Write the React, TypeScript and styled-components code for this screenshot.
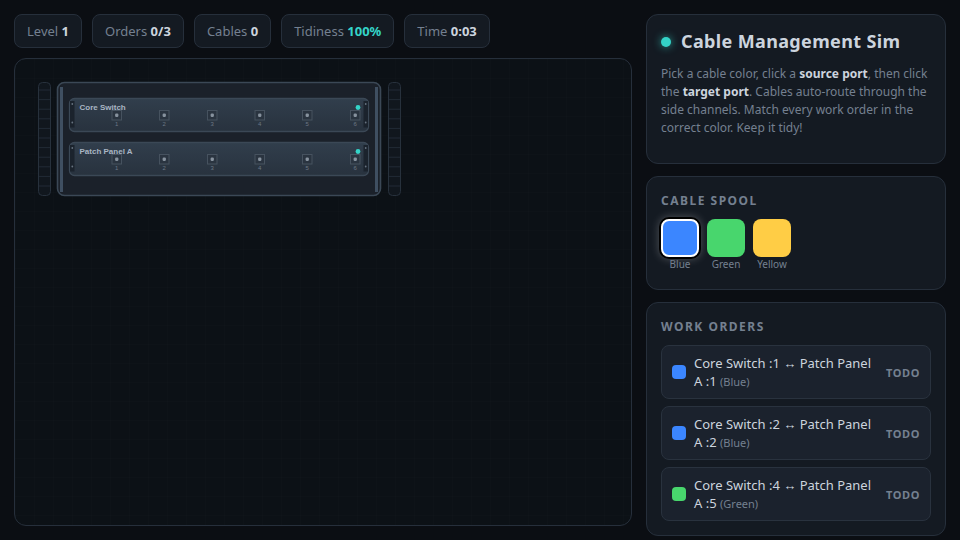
import styled, { createGlobalStyle } from 'styled-components';

const GlobalStyle = createGlobalStyle`
  * {
    box-sizing: border-box;
  }

  html,
  body {
    margin: 0;
    height: 100%;
    overflow: hidden;
    background: #0b0e13;
    font-family: 'Noto Sans', sans-serif;
  }
`;

const stats = [
  { label: 'Level', value: '1' },
  { label: 'Orders', value: '0/3' },
  { label: 'Cables', value: '0' },
  { label: 'Tidiness', value: '100%', good: true },
  { label: 'Time', value: '0:03' },
];

const spools = [
  { name: 'Blue', color: '#3b86ff', active: true },
  { name: 'Green', color: '#48d66d' },
  { name: 'Yellow', color: '#ffcd45' },
];

const orders = [
  { from: 1, to: 1, name: 'Blue', color: '#3b86ff' },
  { from: 2, to: 2, name: 'Blue', color: '#3b86ff' },
  { from: 4, to: 5, name: 'Green', color: '#48d66d' },
];

const portX = [116.5, 164, 212, 259.5, 307, 355];
const railSlots = Array.from({ length: 11 }, (_, i) => 90 + i * 9.6);

const RackUnit = ({ top, name }: { top: number; name: string }) => (
  <g>
    <rect x="69.5" y={top + 0.5} width="299" height="33" rx="5" fill="url(#unitFill)" stroke="#3b4856" strokeWidth="1.3" />
    <rect x="70" y={top + 3} width="4.5" height="26.5" fill="#1b232d" />
    <rect x="363.5" y={top + 3} width="4.5" height="26.5" fill="#1b232d" />
    <circle cx="72.3" cy={top + 6} r="0.9" fill="#66727f" />
    <circle cx="72.3" cy={top + 24.5} r="0.9" fill="#66727f" />
    <circle cx="365.7" cy={top + 6} r="0.9" fill="#66727f" />
    <circle cx="365.7" cy={top + 24.5} r="0.9" fill="#66727f" />
    <UnitLabel x="79.5" y={top + 12}>
      {name}
    </UnitLabel>
    {portX.map((x, i) => (
      <g key={x}>
        <rect x={x - 4.5} y={top + 12.5} width="9.5" height="9.5" fill="#2a3440" stroke="#46525f" />
        <rect x={x - 1.4} y={top + 15.6} width="3.3" height="3.3" rx="1.2" fill="#87929e" />
        <PortNumber x={x + 0.2} y={top + 27.5}>
          {i + 1}
        </PortNumber>
      </g>
    ))}
    <circle cx="358" cy={top + 9.5} r="2.4" fill="#34d4c8" />
  </g>
);

const Rail = ({ x }: { x: number }) => (
  <g>
    <rect x={x + 0.5} y="82.5" width="12" height="113" rx="4" fill="#11171e" stroke="#27313c" />
    {railSlots.map((y) => (
      <line key={y} x1={x + 1} x2={x + 12} y1={y} y2={y} stroke="#222b36" />
    ))}
  </g>
);

const App = () => {
  return (
    <Page>
      <GlobalStyle />
      <MainColumn>
        <StatsBar>
          {stats.map((stat) => (
            <StatPill key={stat.label}>
              {stat.label} <StatValue $good={stat.good}>{stat.value}</StatValue>
            </StatPill>
          ))}
        </StatsBar>
        <Canvas>
          <RackSvg viewBox="15 59 616 466" role="img" aria-label="Server rack">
            <defs>
              <linearGradient id="unitFill" x1="0" y1="0" x2="0" y2="1">
                <stop offset="0" stopColor="#313e4c" />
                <stop offset="1" stopColor="#28323e" />
              </linearGradient>
            </defs>
            <Rail x={38} />
            <Rail x={388} />
            <rect x="57.5" y="82.5" width="323" height="113" rx="7" fill="#1b212a" stroke="#3b4856" strokeWidth="1.6" />
            <rect x="60" y="87" width="3" height="105" fill="#3f4f61" />
            <rect x="375" y="87" width="3" height="105" fill="#3f4f61" />
            <RackUnit top={98} name="Core Switch" />
            <RackUnit top={142} name="Patch Panel A" />
          </RackSvg>
        </Canvas>
      </MainColumn>
      <SideColumn>
        <IntroPanel>
          <TitleRow>
            <TitleDot />
            <Title>Cable Management Sim</Title>
          </TitleRow>
          <Intro>
            Pick a cable color, click a <strong>source port</strong>, then click the <strong>target port</strong>. Cables
            auto-route through the side channels. Match every work order in the correct color. Keep it tidy!
          </Intro>
        </IntroPanel>
        <Panel>
          <SectionTitle>Cable Spool</SectionTitle>
          <SpoolRow>
            {spools.map((spool) => (
              <Spool key={spool.name}>
                <SpoolSwatch $color={spool.color} $active={spool.active} />
                <SpoolName>{spool.name}</SpoolName>
              </Spool>
            ))}
          </SpoolRow>
        </Panel>
        <Panel>
          <SectionTitle>Work Orders</SectionTitle>
          <OrderList>
            {orders.map((order) => (
              <OrderRow key={order.from}>
                <OrderSwatch $color={order.color} />
                <OrderText>
                  Core Switch :{order.from} ↔ Patch Panel A :{order.to} <OrderColor>({order.name})</OrderColor>
                </OrderText>
                <OrderStatus>Todo</OrderStatus>
              </OrderRow>
            ))}
          </OrderList>
        </Panel>
      </SideColumn>
    </Page>
  );
};

const Page = styled.div`
  display: flex;
  gap: 14px;
  width: 960px;
  height: 540px;
  padding: 14px;
  background: #0b0e13;
`;

const MainColumn = styled.main`
  display: flex;
  flex-direction: column;
  gap: 10px;
  width: 618px;
  height: 512px;
`;

const StatsBar = styled.div`
  display: flex;
  gap: 10px;
`;

const StatPill = styled.div`
  height: 34px;
  padding: 0 12px;
  font-size: 13px;
  line-height: 32px;
  color: #748090;
  background: #141a22;
  border: 1px solid #262f3b;
  border-radius: 8px;
`;

const StatValue = styled.b<{ $good?: boolean }>`
  font-weight: 700;
  color: ${(props) => (props.$good ? '#34d4c8' : '#ccd4de')};
`;

const Canvas = styled.section`
  flex: 1;
  overflow: hidden;
  background-color: #0c1116;
  background-image:
    linear-gradient(rgba(255, 255, 255, 0.008) 1px, transparent 1px),
    linear-gradient(90deg, rgba(255, 255, 255, 0.008) 1px, transparent 1px);
  background-size: 19px 19px;
  border: 1px solid #262f3b;
  border-radius: 12px;
`;

const RackSvg = styled.svg`
  display: block;
  width: 616px;
  height: 466px;
`;

const UnitLabel = styled.text`
  font-family: 'Liberation Sans', sans-serif;
  font-size: 8px;
  font-weight: 700;
  fill: #a9b6c4;
`;

const PortNumber = styled.text`
  font-family: 'Liberation Sans', sans-serif;
  font-size: 6px;
  text-anchor: middle;
  fill: #6b7785;
`;

const SideColumn = styled.aside`
  display: flex;
  flex-direction: column;
  gap: 12px;
  width: 300px;
`;

const Panel = styled.section`
  flex: none;
  padding: 14px;
  background: #141a22;
  border: 1px solid #262f3b;
  border-radius: 12px;
`;

const IntroPanel = styled(Panel)`
  height: 150px;
`;

const TitleRow = styled.div`
  display: flex;
  align-items: center;
  gap: 10px;
  margin-bottom: 11px;
`;

const TitleDot = styled.span`
  width: 10px;
  height: 10px;
  background: #34d4c8;
  border-radius: 50%;
  box-shadow: 0 0 8px rgba(52, 212, 200, 0.7);
`;

const Title = styled.h1`
  margin: 0;
  font-size: 18px;
  font-weight: 700;
  line-height: 25px;
  letter-spacing: 0.36px;
  color: #ccd4de;
`;

const Intro = styled.p`
  margin: 0;
  font-size: 12px;
  line-height: 18px;
  color: #748090;

  strong {
    font-weight: 700;
    color: #ccd4de;
  }
`;

const SectionTitle = styled.h2`
  margin: 2px 0 10px;
  font-size: 12px;
  font-weight: 700;
  line-height: 16px;
  letter-spacing: 1.5px;
  text-transform: uppercase;
  color: #748090;
`;

const SpoolRow = styled.div`
  display: flex;
  gap: 8px;
  margin-bottom: 4px;
`;

const Spool = styled.div`
  display: flex;
  flex-direction: column;
  align-items: center;
  width: 38px;
`;

const SpoolSwatch = styled.div<{ $color: string; $active?: boolean }>`
  width: 38px;
  height: 38px;
  background: ${(props) => props.$color};
  border: ${(props) => (props.$active ? '2px solid #fff' : 'none')};
  border-radius: 8px;
  box-shadow: ${(props) => (props.$active ? '0 0 0 2px #000, 0 0 8px 2px rgba(255, 255, 255, 0.25)' : 'none')};
`;

const SpoolName = styled.span`
  font-size: 10px;
  line-height: 14px;
  color: #748090;
`;

const OrderList = styled.div`
  display: flex;
  flex-direction: column;
  gap: 7px;
`;

const OrderRow = styled.div`
  display: flex;
  align-items: center;
  gap: 8px;
  height: 54px;
  padding: 0 10px;
  background: #1b222d;
  border: 1px solid #29323e;
  border-radius: 8px;
`;

const OrderSwatch = styled.span<{ $color: string }>`
  flex: none;
  width: 14px;
  height: 14px;
  background: ${(props) => props.$color};
  border-radius: 4px;
`;

const OrderText = styled.div`
  flex: 1;
  font-size: 13px;
  line-height: 18px;
  color: #ccd4de;
`;

const OrderColor = styled.span`
  font-size: 11px;
  color: #748090;
`;

const OrderStatus = styled.span`
  font-size: 11px;
  font-weight: 700;
  letter-spacing: 0.6px;
  text-transform: uppercase;
  color: #748090;
`;

export default App;
